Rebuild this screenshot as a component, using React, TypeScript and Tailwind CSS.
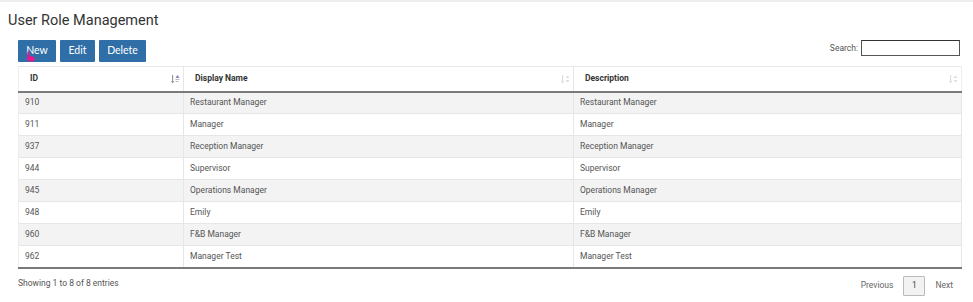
import React from "react";

type Role = { id: number; name: string; description: string };

const roles: Role[] = [
  { id: 910, name: "Restaurant Manager", description: "Restaurant Manager" },
  { id: 911, name: "Manager", description: "Manager" },
  { id: 937, name: "Reception Manager", description: "Reception Manager" },
  { id: 944, name: "Supervisor", description: "Supervisor" },
  { id: 945, name: "Operations Manager", description: "Operations Manager" },
  { id: 948, name: "Emily", description: "Emily" },
  { id: 960, name: "F&B Manager", description: "F&B Manager" },
  { id: 962, name: "Manager Test", description: "Manager Test" },
];

function SortIcon({ active }: { active?: boolean }) {
  return (
    <svg width="9" height="10" viewBox="0 0 9 10" className="shrink-0">
      <rect x="1" y="1" width="1.2" height="8" fill={active ? "#9a9a9a" : "#dedede"} />
      <path d="M0 7 L1.6 9.4 L3.2 7 Z" fill={active ? "#9a9a9a" : "#dedede"} />
      {active ? (
        <>
          <path d="M4.5 4 L6.5 1 L8.5 4 Z" fill="#8a7fc4" />
          <rect x="4.5" y="5" width="4" height="1" fill="#b9b9b9" />
          <rect x="4.5" y="7" width="3" height="1" fill="#b9b9b9" />
        </>
      ) : (
        <>
          <path d="M4.5 4 L6.5 1.5 L8.5 4 Z" fill="#dedede" />
          <path d="M4.5 6 L6.5 8.5 L8.5 6 Z" fill="#dedede" />
        </>
      )}
    </svg>
  );
}

function Cursor() {
  return (
    <svg width="10" height="11" viewBox="0 0 9 10" className="absolute left-[8px] top-[11px]">
      <path
        d="M2 0.5 C2.8 0.5 3 1 3 1.6 L3 4.5 L6.5 5.2 C7.8 5.5 8.2 6.3 7.8 7.5 L7 9.5 L2.5 9.5 L0.5 6.8 C0.2 6.2 0.8 5.6 1.4 6 L1.2 1.6 C1.2 1 1.4 0.5 2 0.5 Z"
        fill="#e8178f"
      />
    </svg>
  );
}

export default function App() {
  return (
    <div
      className="w-[973px] h-[302px] bg-white border-t-2 border-[#eeeeee] text-[#333333] overflow-hidden"
      style={{ fontFamily: "Roboto, 'Noto Sans', sans-serif" }}
    >
      <h1 className="pl-2 pt-[9px] text-[14.5px] leading-[20px] text-[#333]">
        User Role Management
      </h1>

      <div className="flex items-end justify-between pl-[18px] pr-[13px] mt-[9px]">
        <div className="flex gap-1" style={{ fontFamily: "Lato, 'Open Sans', sans-serif" }}>
          <button className="relative w-[38px] h-[22px] bg-[#2f6ea7] text-white text-[10.5px] rounded-[1px]">
            New
            <Cursor />
          </button>
          <button className="w-[35px] h-[22px] bg-[#2f6ea7] text-white text-[10.5px] rounded-[1px]">
            Edit
          </button>
          <button className="w-[47px] h-[22px] bg-[#2f6ea7] text-white text-[10.5px] rounded-[1px]">
            Delete
          </button>
        </div>
        <label className="flex items-center gap-[3px] text-[8.5px] text-[#555] pb-[6px]">
          Search:
          <span className="block w-[99px] h-[16px] border border-[#555] border-t-[#333] bg-white" />
        </label>
      </div>

      <div className="mx-[18px] mr-[11px] mt-[4px]">
        <table className="w-full border-collapse text-[8.5px]">
          <thead>
            <tr className="h-[25px] border-t border-[#e8e8e8]">
              <th className="w-[165px] text-left font-bold pl-[11px] pr-[3px] border-b-2 border-[#7a7a7a] border-l border-l-[#eeeeee]">
                <div className="flex items-center justify-between">
                  ID <SortIcon active />
                </div>
              </th>
              <th className="w-[390px] text-left font-bold pl-[11px] pr-[3px] border-b-2 border-[#7a7a7a] border-l border-l-[#e6e6e6]">
                <div className="flex items-center justify-between">
                  Display Name <SortIcon />
                </div>
              </th>
              <th className="text-left font-bold pl-[11px] pr-[3px] border-b-2 border-[#7a7a7a] border-l border-l-[#e6e6e6] border-r border-r-[#eeeeee]">
                <div className="flex items-center justify-between">
                  Description <SortIcon />
                </div>
              </th>
            </tr>
          </thead>
          <tbody className="text-[#555]">
            {roles.map((r, i) => (
              <tr
                key={r.id}
                className={`h-[22px] ${i % 2 === 0 ? "bg-[#f3f3f3]" : "bg-white"} ${i === roles.length - 1 ? "border-b-2 border-b-[#7a7a7a]" : "border-b border-b-[#e6e6e6]"}`}
              >
                <td className="pl-[6px] border-l border-[#eeeeee]">{r.id}</td>
                <td className="pl-[6px] border-l border-[#e6e6e6]">{r.name}</td>
                <td className="pl-[6px] border-l border-r border-[#e6e6e6]">{r.description}</td>
              </tr>
            ))}
          </tbody>
        </table>
      </div>

      <div className="flex items-center justify-between pl-[18px] pr-[20px] mt-[5px] text-[8.5px] text-[#555]">
        <span className="-mt-[2px]">Showing 1 to 8 of 8 entries</span>
        <div className="flex items-center mt-[2px]">
          <span className="text-[#666] mr-[10px]">Previous</span>
          <span className="w-[22px] h-[20px] flex items-center justify-center border border-[#bbbbbb] bg-[#f2f2f2] rounded-[1px] text-[#444] mr-[10px]">
            1
          </span>
          <span className="text-[#666]">Next</span>
        </div>
      </div>
    </div>
  );
}
